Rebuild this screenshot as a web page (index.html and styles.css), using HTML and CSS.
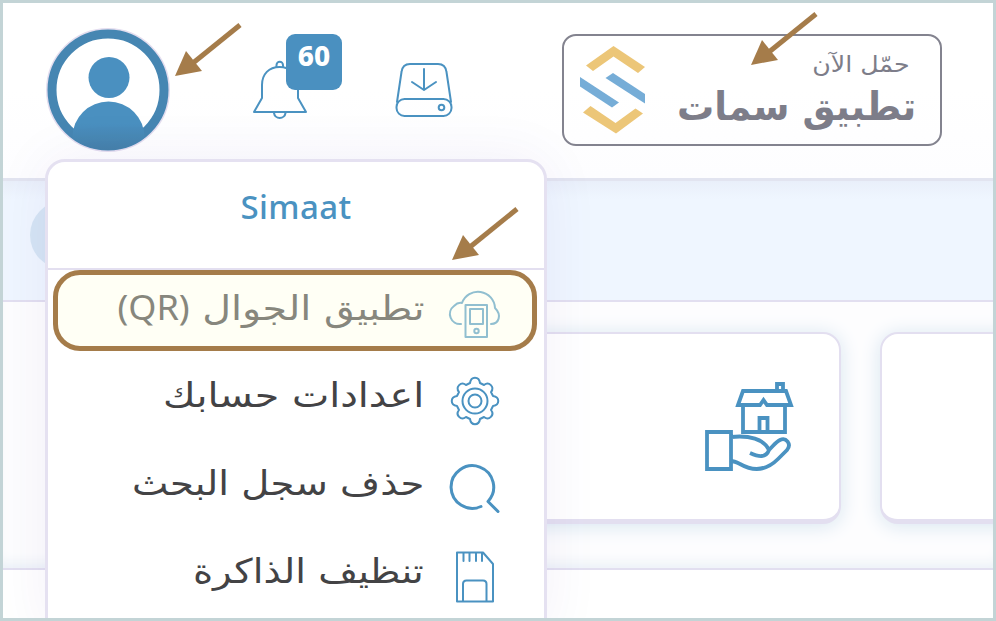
FILE: index.html
```html
<!DOCTYPE html>
<html lang="ar">
<head>
<meta charset="utf-8">
<title>Simaat</title>
<link rel="stylesheet" href="styles.css">
</head>
<body>
<div class="frame">
  <header class="topbar">
    <svg class="avatar" viewBox="0 0 124 124">
      <defs>
        <linearGradient id="shade" x1="0" y1="0" x2="0" y2="1"><stop offset="0" stop-color="#4a90c0"/><stop offset=".3" stop-color="#4a90c0"/><stop offset=".7" stop-color="#4580a8"/></linearGradient>
        <clipPath id="disc"><circle cx="62" cy="62" r="60"/></clipPath>
      </defs>
      <circle cx="62" cy="62" r="61" fill="#fff" stroke="#e3ddef" stroke-width="2"/>
      <circle cx="62" cy="62" r="56" fill="#fff" stroke="#4686b2" stroke-width="9"/>
      <circle cx="63" cy="49.500" r="20.500" fill="#4a90c0"/>
      <ellipse cx="62.500" cy="109" rx="36" ry="35.500" fill="url(#shade)" clip-path="url(#disc)"/>
    </svg>
    <div class="bell">
      <svg viewBox="0 0 56 60" class="line">
        <path d="M2 52 L10 38 V25 C10 14 17 7 27.500 7 S46 14 46 25 V38 L54 52 Z"/>
        <path d="M24.500 7 V5 A3.200 3.200 0 0 1 31 5 V7 M22 53 A5.800 5.800 0 0 0 33.500 53"/>
      </svg>
      <span class="badge">60</span>
    </div>
    <svg class="drive line" viewBox="0 0 58 56">
      <path d="M2 40 L6.500 10 Q7.500 2 15 2 H43 Q50.500 2 51.500 10 L56 40"/>
      <rect x="1.500" y="37" width="55" height="17" rx="8"/>
      <path d="M29 7 V28 M17 20 L29 28 L41 20"/>
      <circle cx="46.500" cy="45.500" r="2.800"/>
    </svg>
    <a class="app">
      <svg class="logo" viewBox="0 0 66 88">
        <g fill="#ecc678"><path d="M6 19.500 L33.500 0 L65 21 L58 27 L33.500 10.500 L13 25 Z"/><path d="M3 66.500 L10.500 60 L35.500 77 L55.500 62.500 L63 67.500 L36 87.500 Z"/></g>
        <g fill="#76add7"><path d="M25.500 32 L33 27 L65 48 V57.500 Z"/><path d="M0 31 L39 56.500 L32 61.500 L0 40.500 Z"/></g>
      </svg>
      <span class="app-copy" dir="rtl"><span class="app-small">حمّل الآن</span><span class="app-big">تطبيق سمات</span></span>
    </a>
  </header>
  <div class="strip"><span class="bubble"></span></div>
  <main class="board">
    <section class="card wide">
      <svg class="house" viewBox="0 0 90 90">
        <path d="M38 24 V50 H80 V24 M33 23 L38 9 H81 L86 23 H62 L58.500 18 L55 23 Z M72 8 V2 H78 V8 M54.500 49 V36 H62.500 V49"/>
        <path d="M2 50 H26 V87 H2 Z M26 55 C44 53 59 57 64 68 M45 71 C54 75 61 76 64 68 C69 63 71 60 75 58 C81 55 87 62 82 68 L73 77 C62 88 49 90 35 82 C31 80 29 79 26 79"/>
      </svg>
    </section>
    <section class="card"></section>
  </main>
  <div class="below"></div>

  <nav class="menu">
    <div class="menu-title"><span>Simaat</span></div>
    <ul dir="rtl">
      <li class="current">
        <svg class="line" viewBox="0 0 50 50"><path d="M11 35 A10 10 0 0 1 4 17 Q8 13 12 14 A17 17 0 0 1 45 19 C52 26 49 35 41 35"/><path d="M15.500 16 H37 V48 H15.500 Z M20 20 H33 V35 H20 Z"/><circle cx="26.500" cy="42" r="2.200"/></svg>
        <span class="label l1">تطبيق الجوال <bdi class="latin">(QR)</bdi></span></li>
      <li>
        <svg class="line" viewBox="0 0 50 50"><circle cx="25" cy="24" r="12.500"/><circle cx="25" cy="24" r="6.500"/><path transform="translate(0 -1)" d="M20 7 C21 0 29 0 30 7 Q32 8 34 9 C39 5 45 11 41 16 Q42 18 43 20 C50 21 50 29 43 30 Q42 32 41 34 C45 39 39 45 34 41 Q32 42 30 43 C29 50 21 50 20 43 Q18 42 16 41 C11 45 5 39 9 34 Q8 32 7 30 C0 29 0 21 7 20 Q8 18 9 16 C5 11 11 5 16 9 Q18 8 20 7 Z"/></svg>
        <span class="label l2">اعدادات حسابك</span></li>
      <li>
        <svg class="line heavy" viewBox="0 0 50 50"><path d="M31 41.500 A21.300 21.300 0 1 1 38 36.500 L48 46.500"/></svg>
        <span class="label l3">حذف سجل البحث</span></li>
      <li>
        <svg class="line" viewBox="0 0 50 50"><path d="M7 -.5 H33 L43 11 V48.500 H7 Z M13 48.500 V31 Q13 27.500 16.500 27.500 H33 Q36.500 27.500 36.500 31 V48.500 M13.500 0 V8 M19.500 0 V8 M26 0 V8 M32 0 V8"/></svg>
        <span class="label l4">تنظيف الذاكرة</span></li>
    </ul>
  </nav>

  <svg class="arrow a1" viewBox="0 0 66 54"><path d="M65 2 L18 40" /><polygon points="0,53 11,28 27,48"/></svg>
  <svg class="arrow a2" viewBox="0 0 66 54"><path d="M65 2 L18 40" /><polygon points="0,53 11,28 27,48"/></svg>
  <svg class="arrow a3" viewBox="0 0 66 54"><path d="M65 2 L18 40" /><polygon points="0,53 11,28 27,48"/></svg>
</div>
</body>
</html>
```
FILE: styles.css
```css
* { box-sizing: border-box; }
body { margin: 0; font-family: "DejaVu Sans", sans-serif; }
.frame { position: relative; width: 996px; height: 621px; border: 3px solid #c3d4d6; background: #fff; overflow: hidden; display: flex; flex-direction: column; }
svg { display: block; overflow: visible; }
.line { fill: none; stroke: #4a92c1; stroke-width: 2; stroke-linejoin: round; stroke-linecap: round; }

.topbar { height: 175px; flex: none; display: flex; align-items: flex-start; padding: 25px 0 0 43px; background: linear-gradient(#fff 50%, #fdfdff); }
.avatar { width: 124px; height: 124px; }
.bell { position: relative; width: 56px; margin: 32px 0 0 82px; }
.bell svg { width: 56px; height: 60px; }
.badge { position: absolute; left: 34px; top: -26px; width: 56px; height: 56px; border-radius: 9px; background: #4a90c0; color: #fff; font: 800 28px/42px "Noto Sans", sans-serif; text-align: center; }
.drive { width: 58px; height: 56px; margin: 34px 0 0 87px; }
.app { display: flex; justify-content: space-between; width: 380px; height: 112px; margin: 6px 0 0 109px; border: 2px solid #83838f; border-radius: 14px; padding: 10px 24px 0 16px; color: #7d7d89; }
.logo { width: 66px; height: 88px; }
.app-copy { display: flex; flex-direction: column; align-items: flex-start; white-space: nowrap; }
.app-small { font-size: 23px; line-height: 36px; margin-right: 6px; transform: scaleX(1.1); transform-origin: right; }
.app-big { font-size: 36px; font-weight: 700; line-height: 50px; transform: scale(1.03, 1.08); transform-origin: right; }

.strip { flex: none; height: 124px; border-top: 3px solid #e2e4f0; border-bottom: 2px solid #e2dff0; background: linear-gradient(#e9effa, #eff6ff 18px, #eff6ff); }
.bubble { display: block; width: 68px; height: 68px; border-radius: 50%; background: #d5e5f4; margin: 20px 0 0 27px; }
.board { flex: none; height: 266px; display: flex; gap: 39px; padding: 30px 0 0 297px; background: #fdfdfe; box-shadow: inset 0 -12px 14px -8px #e9f0f6; overflow: hidden; }
.card { width: 220px; height: 192px; flex: none; border: 2px solid #e3dff0; border-bottom-width: 5px; border-radius: 18px; background: #fff; box-shadow: 0 2px 20px #d7e5f0; }
.wide { width: 541px; padding: 48px 0 0 403px; }
.house { width: 90px; height: 90px; fill: none; stroke: #4a92c1; stroke-width: 3.800; }
.below { flex: 1; border-top: 2px solid #e2dff0; background: #fff; }

.menu { position: absolute; left: 42px; top: 156px; width: 502px; height: 480px; border: 3px solid #e5e1f1; border-radius: 20px; background: #fff; box-shadow: 0 0 60px rgba(70, 40, 160, .06); }
.menu-title { height: 108px; border-bottom: 2px solid #e3dff0; display: flex; justify-content: center; padding-top: 19px; color: #4a92c1; font: 500 33px/52px "Noto Sans", sans-serif; letter-spacing: .4px; }
.menu ul { list-style: none; margin: 0; padding: 0; }
.menu li { height: 88px; display: flex; align-items: flex-start; gap: 26px; padding: 18px 44px 0 0; color: #434345; }
.menu li svg { width: 50px; height: 50px; flex: none; }
.menu .heavy { stroke-width: 3; }
.label { font-size: 34px; line-height: 42px; margin-top: -3px; white-space: nowrap; transform-origin: right; }
.l1 { transform: scaleX(1.166); }
.l2 { transform: scaleX(1.165); }
.l3 { transform: scaleX(1.136); }
.l4 { transform: scaleX(1.133); }
.latin { display: inline-block; font-family: "Noto Sans", sans-serif; transform: scaleX(.91); transform-origin: right; }
.menu .current { height: 81px; margin: 0 7px 8px 5px; padding: 14px 32px 0 0; border: 5px solid #a57c4a; border-radius: 27px; background: #fffff5; color: #87877d; }
.current svg { stroke: #91bfd0; }

.arrow { position: absolute; width: 66px; height: 54px; fill: #a57c4a; }
.arrow path { stroke: #a57c4a; stroke-width: 5; }
.a1 { left: 172px; top: 20px; }
.a2 { left: 748px; top: 9px; }
.a3 { left: 449px; top: 204px; }
```
